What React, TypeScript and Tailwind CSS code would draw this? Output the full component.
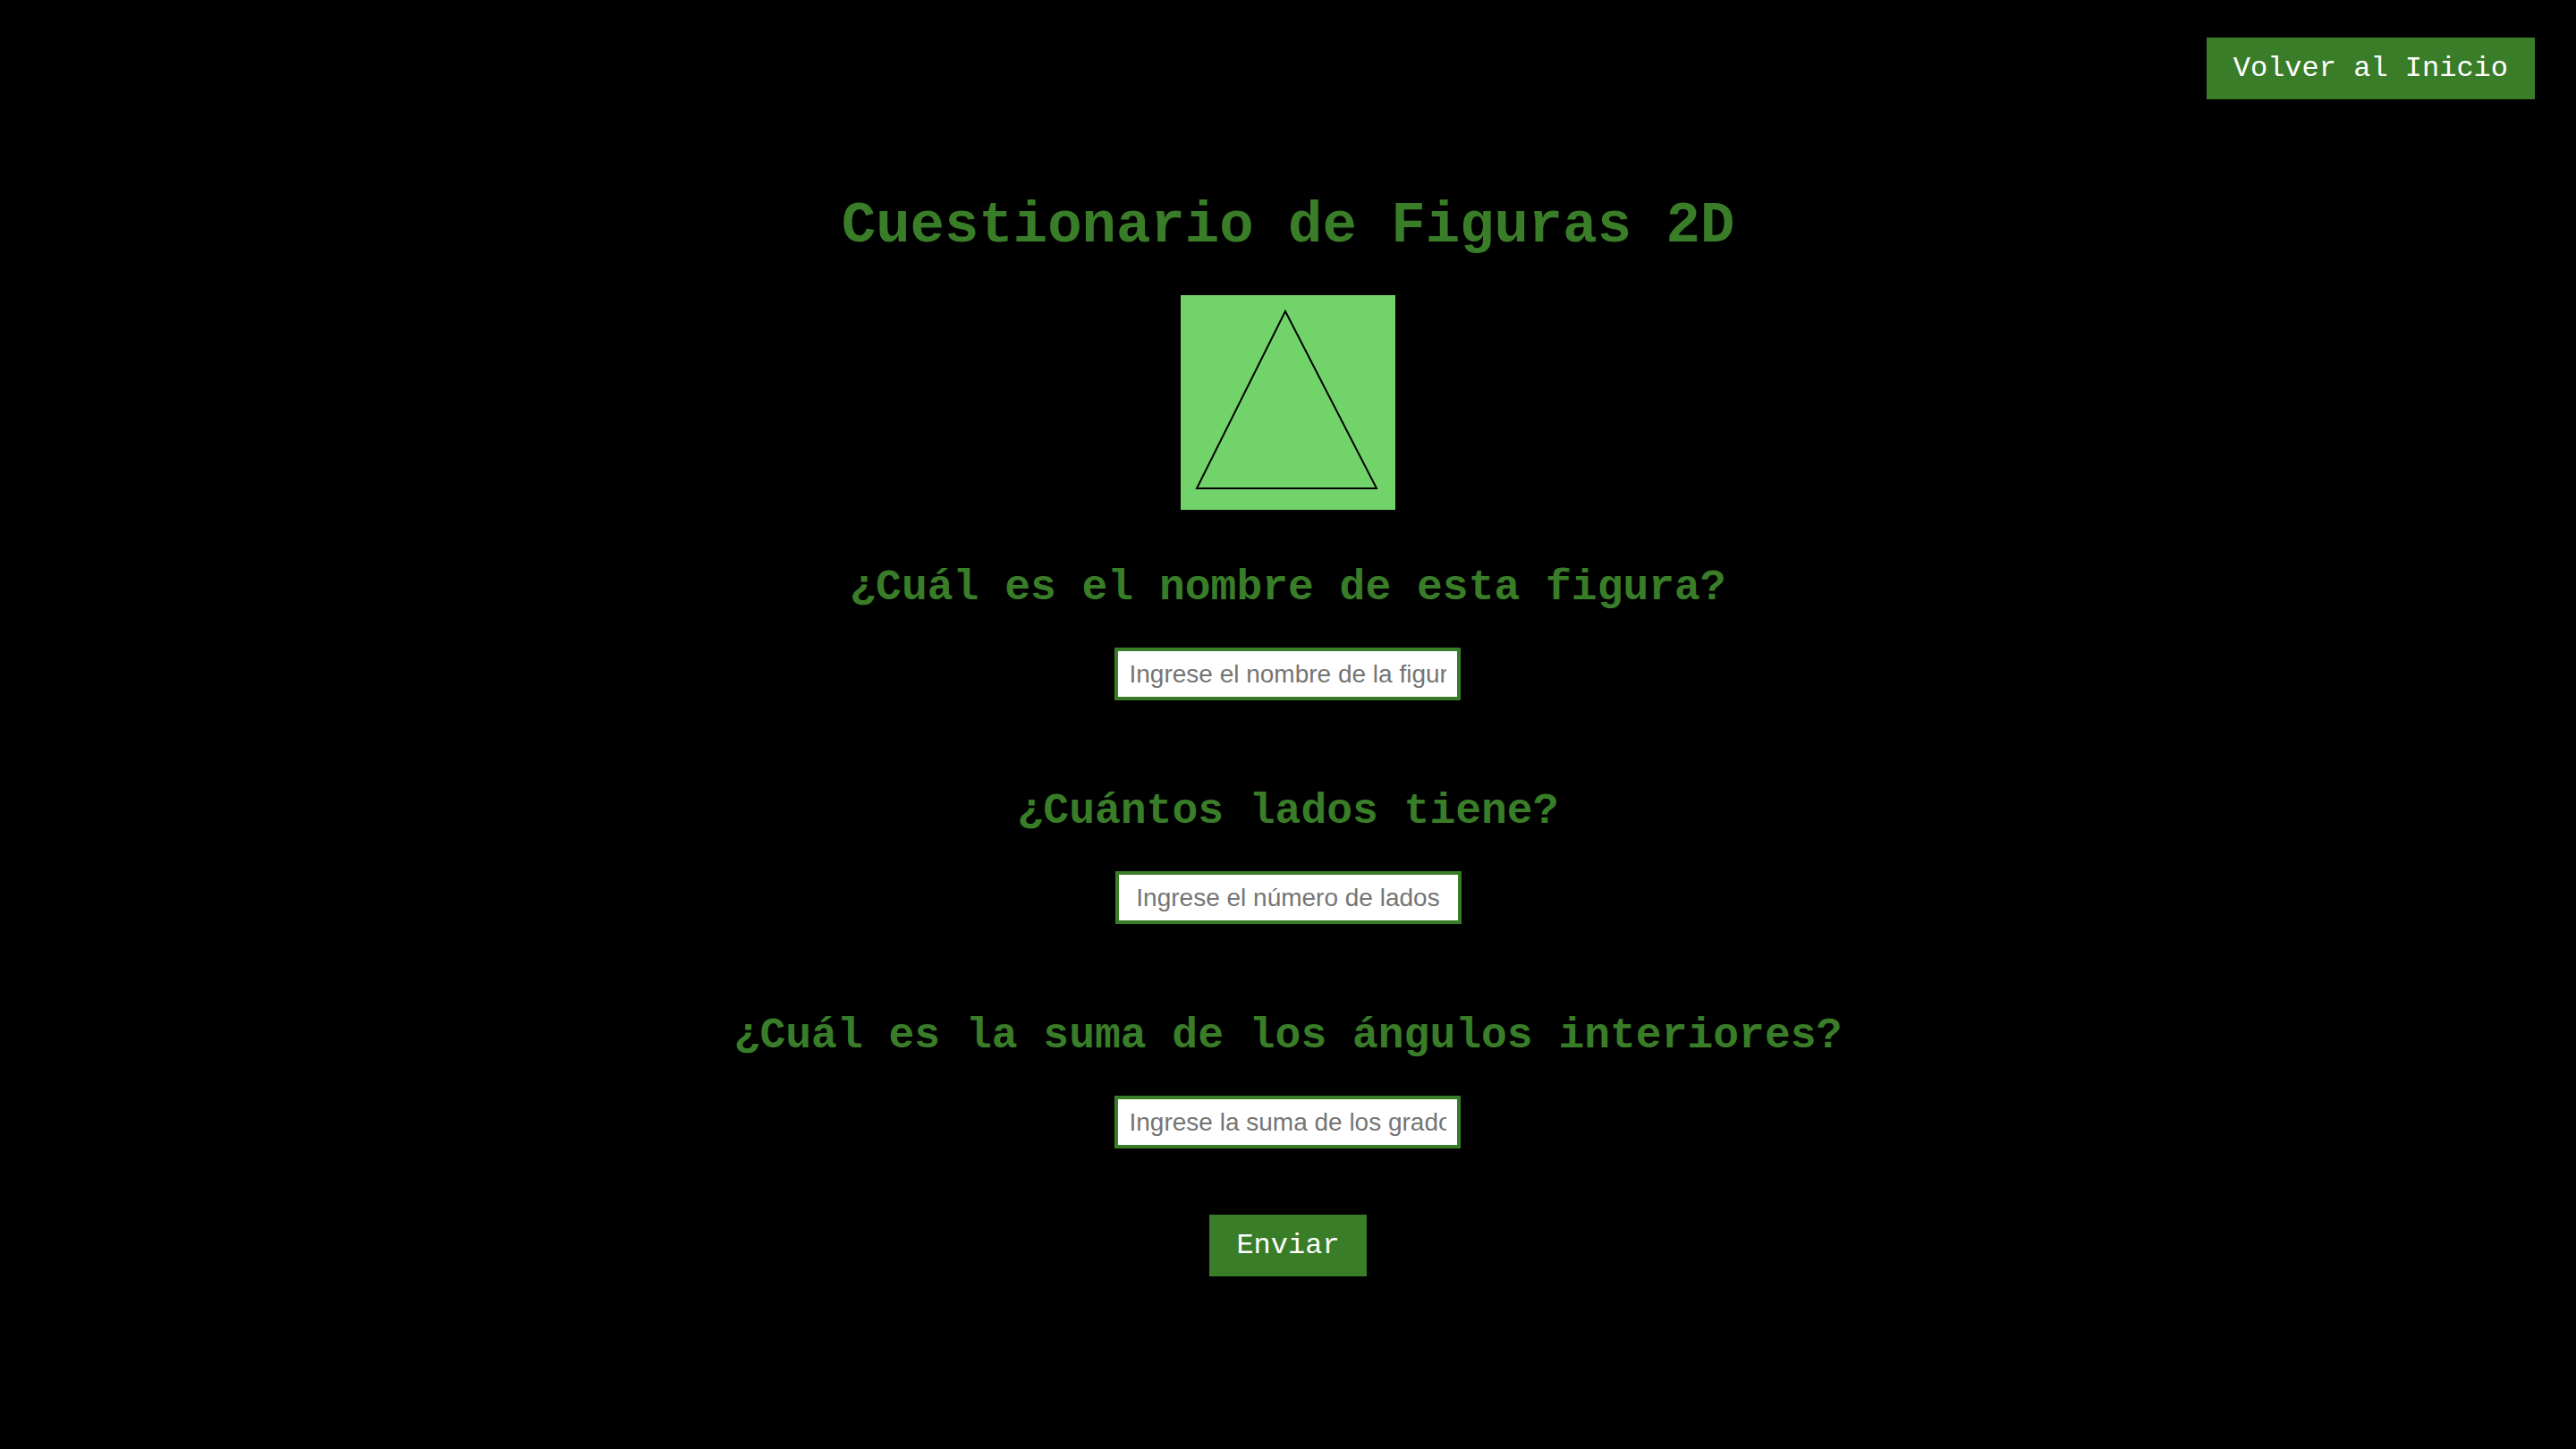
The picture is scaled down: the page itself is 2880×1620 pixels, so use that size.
import { useState } from "react";

const mono = "font-['Liberation_Mono','Courier_New',monospace]";

const Question = ({
  label,
  placeholder,
  value,
  onChange,
  top,
}: {
  label: string;
  placeholder: string;
  value: string;
  onChange: (v: string) => void;
  top: string;
}) => (
  <div className="flex flex-col items-center">
    <h2 className={`${mono} ${top} text-[48px] leading-[54px] font-bold text-[#3a7d28]`}>
      {label}
    </h2>
    <input
      type="text"
      value={value}
      onChange={(e) => onChange(e.target.value)}
      placeholder={placeholder}
      className="mt-10 w-[387px] h-[59px] border-4 border-[#3a7d28] bg-white px-3 text-center text-[28px] text-black placeholder:text-[#757575] font-['Liberation_Sans',Arial,sans-serif] outline-none"
    />
  </div>
);

const App = () => {
  const [name, setName] = useState("");
  const [sides, setSides] = useState("");
  const [angles, setAngles] = useState("");

  return (
    <div className="min-h-screen bg-black">
      {/* Header */}
      <header className="flex justify-end pt-[42px] pr-[46px]">
        <button
          className={`${mono} bg-[#3a7d28] text-white text-[32px] leading-[37px] px-[30px] py-4`}
        >
          Volver al Inicio
        </button>
      </header>

      {/* Quiz */}
      <main className="flex flex-col items-center pb-20">
        <h1 className={`${mono} mt-[106px] text-[64px] leading-[72px] font-bold text-[#3a7d28]`}>
          Cuestionario de Figuras 2D
        </h1>

        <div className="mt-[41px] w-[240px] h-[240px] bg-[#73d36b]">
          <svg width="240" height="240" viewBox="0 0 240 240">
            <polygon points="117,18 18,216 219,216" fill="none" stroke="#000" strokeWidth="2" />
          </svg>
        </div>

        <Question
          top="mt-[60px]"
          label="¿Cuál es el nombre de esta figura?"
          placeholder="Ingrese el nombre de la figura"
          value={name}
          onChange={setName}
        />
        <Question
          top="mt-[97px]"
          label="¿Cuántos lados tiene?"
          placeholder="Ingrese el número de lados"
          value={sides}
          onChange={setSides}
        />
        <Question
          top="mt-[98px]"
          label="¿Cuál es la suma de los ángulos interiores?"
          placeholder="Ingrese la suma de los grados"
          value={angles}
          onChange={setAngles}
        />

        <button
          className={`${mono} mt-[74px] bg-[#3a7d28] text-white text-[32px] leading-[37px] px-[30px] py-4`}
        >
          Enviar
        </button>
      </main>
    </div>
  );
};

export default App;
